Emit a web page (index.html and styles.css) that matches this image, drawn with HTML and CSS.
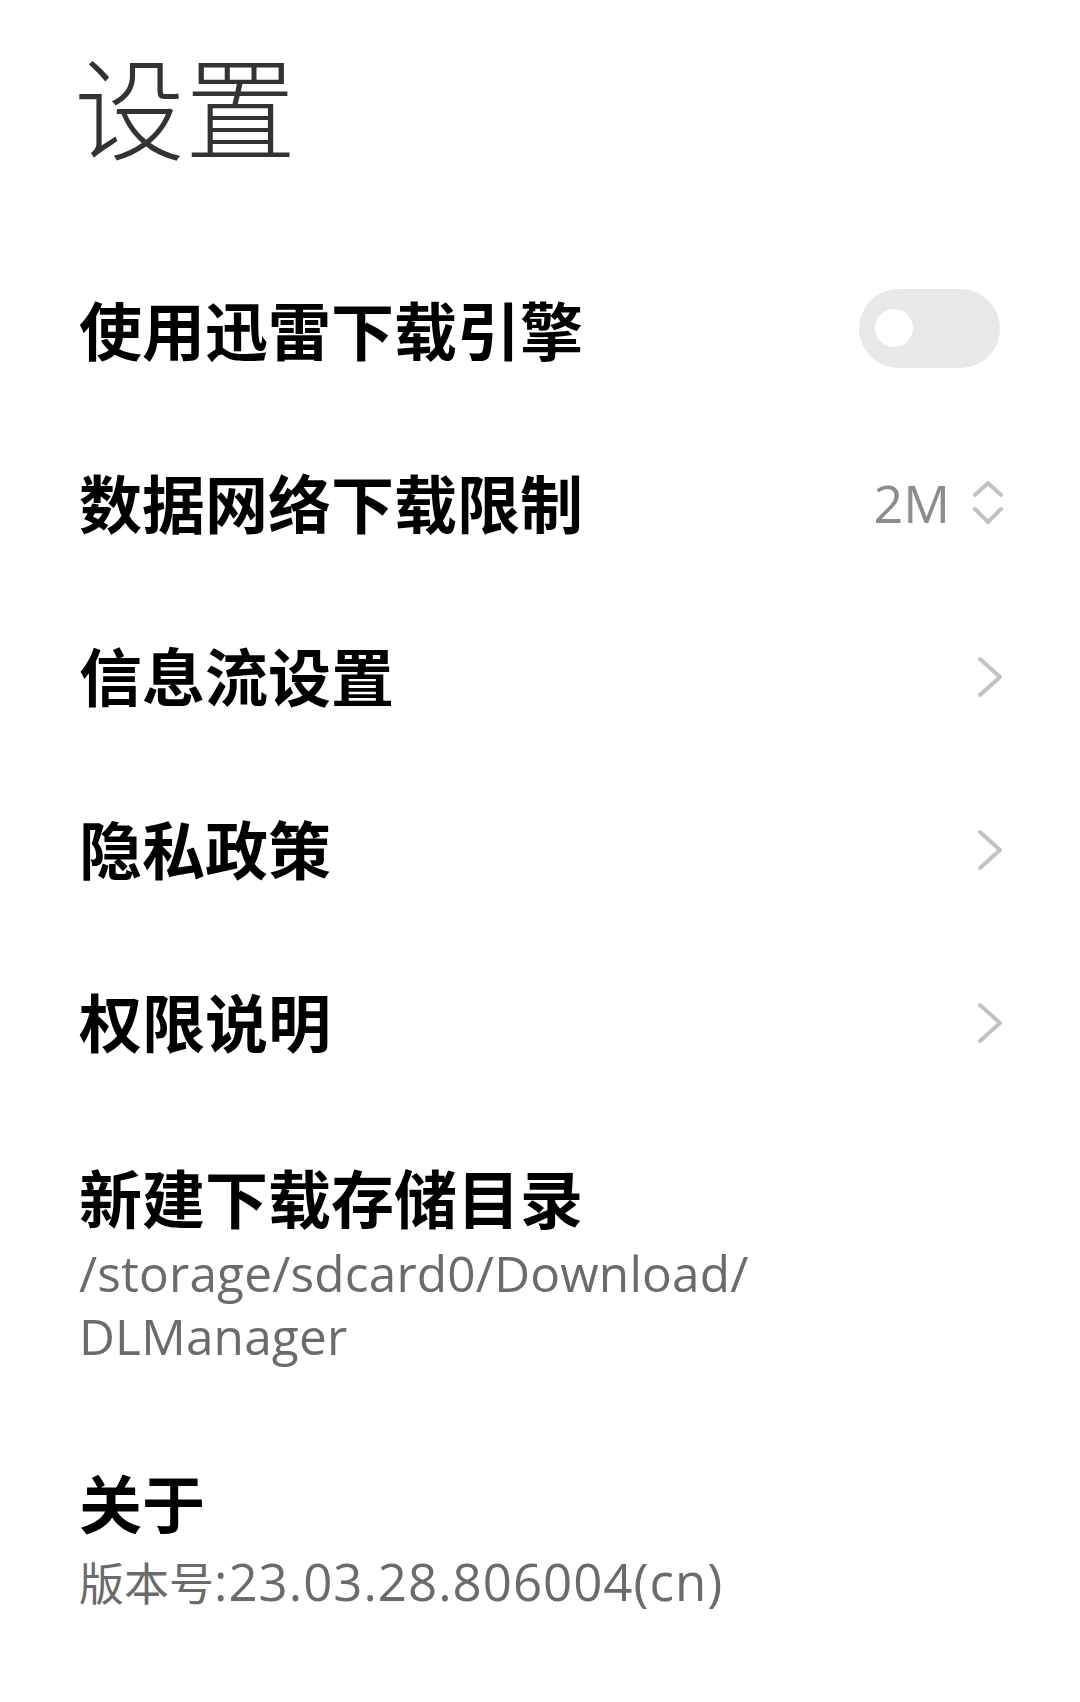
FILE: index.html
```html
<!DOCTYPE html>
<html lang="zh-CN">
<head>
<meta charset="utf-8">
<title>设置</title>
<link rel="stylesheet" href="styles.css">
</head>
<body>
<div class="page">
  <header class="header">
    <h1 class="title">设置</h1>
  </header>

  <div class="row">
    <span class="row-label">使用迅雷下载引擎</span>
    <span class="toggle"><span class="knob"></span></span>
  </div>

  <div class="row">
    <span class="row-label">数据网络下载限制</span>
    <span class="value">
      <span class="value-text">2M</span>
      <svg class="updown" width="32" height="44" viewBox="0 0 32 44">
        <path d="M3 14 L16 2 L29 14" />
        <path d="M3 28 L16 41 L29 28" />
      </svg>
    </span>
  </div>

  <div class="row">
    <span class="row-label">信息流设置</span>
    <svg class="chevron" width="26" height="42" viewBox="0 0 26 42"><path d="M3 3 L23 21 L3 39" /></svg>
  </div>

  <div class="row">
    <span class="row-label">隐私政策</span>
    <svg class="chevron" width="26" height="42" viewBox="0 0 26 42"><path d="M3 3 L23 21 L3 39" /></svg>
  </div>

  <div class="row">
    <span class="row-label">权限说明</span>
    <svg class="chevron" width="26" height="42" viewBox="0 0 26 42"><path d="M3 3 L23 21 L3 39" /></svg>
  </div>

  <div class="block block-storage">
    <div class="row-label">新建下载存储目录</div>
    <div class="subtitle sub-path">/storage/sdcard0/Download/<wbr>DLManager</div>
  </div>

  <div class="block block-about">
    <div class="row-label">关于</div>
    <div class="subtitle sub-version"><span class="cjk">版本号</span>:23.03.28.806004(cn)</div>
  </div>
</div>
</body>
</html>
```

FILE: styles.css
```css
html, body {
  margin: 0;
  padding: 0;
  background: #ffffff;
}

body {
  font-family: "Noto Sans CJK SC", "Noto Sans", sans-serif;
  width: 1080px;
  height: 1702px;
  overflow: hidden;
}

.page {
  padding: 0 80px 0 79px;
}

.header {
  height: 241px;
  padding-top: 48px;
  box-sizing: border-box;
}

.title {
  margin: 0 0 0 -5px;
  font-family: "Noto Sans CJK SC", sans-serif;
  font-size: 111px;
  line-height: 111px;
  font-weight: 300;
  color: #333333;
  letter-spacing: 0;
}

.row {
  height: 173px;
  display: flex;
  align-items: center;
  justify-content: space-between;
}

.row-label {
  font-family: "Noto Sans CJK SC", sans-serif;
  font-size: 63px;
  line-height: 63px;
  font-weight: 700;
  color: #000000;
}

.toggle {
  position: relative;
  width: 141px;
  height: 79px;
  border-radius: 40px;
  background: #e8e8e8;
  margin-right: 0;
  margin-top: 1px;
  display: flex;
  align-items: center;
  padding-left: 16px;
  box-sizing: border-box;
}

.knob {
  width: 38px;
  height: 38px;
  border-radius: 50%;
  background: #ffffff;
}

.value {
  display: flex;
  align-items: center;
  gap: 22px;
  margin-right: -4px;
}

.value-text {
  font-family: "Open Sans", "Noto Sans", sans-serif;
  font-size: 52px;
  line-height: 52px;
  color: #8c8c8c;
  margin-top: 4px;
}

.updown {
  display: block;
  margin-top: 4px;
}

.updown path,
.chevron path {
  fill: none;
  stroke: #c2c2c2;
  stroke-width: 4;
  stroke-linecap: round;
  stroke-linejoin: round;
}

.chevron {
  display: block;
  margin-right: -3px;
  margin-top: 6px;
}

.block-storage {
  padding-top: 58px;
}

.subtitle {
  font-family: "Open Sans", "Noto Sans", "Noto Sans CJK SC", sans-serif;
  font-size: 49.5px;
  line-height: 63px;
  color: #6b6b6b;
}

.sub-path {
  margin-top: 15px;
  max-width: 820px;
  letter-spacing: 0.2px;
}

.block-about {
  padding-top: 101px;
}

.sub-version {
  margin-top: 17px;
  font-size: 51px;
  line-height: 64px;
  letter-spacing: 1px;
}

.cjk {
  font-family: "Noto Sans CJK SC", sans-serif;
  font-size: 45px;
  letter-spacing: 0;
}
```
